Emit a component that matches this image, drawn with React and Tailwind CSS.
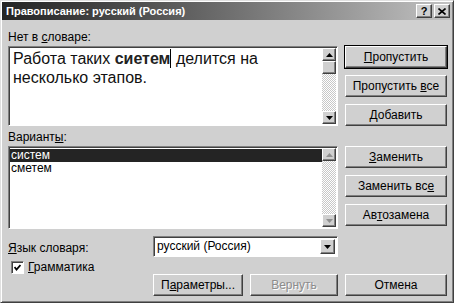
import React from "react";

const raised =
  "border border-t-white border-l-white border-r-[#404040] border-b-[#404040] shadow-[inset_-1px_-1px_#808080] bg-[#d0d0d0]";
const sunken =
  "border border-t-[#808080] border-l-[#808080] border-r-white border-b-white shadow-[inset_1px_1px_#404040] bg-white";
const track =
  "bg-[repeating-conic-gradient(#ffffff_0_25%,#c8c8c8_0_50%)] bg-[length:2px_2px]";

function Arrow({ up, color = "#000" }) {
  return (
    <svg width="7" height="4" viewBox="0 0 7 4">
      <path d={up ? "M3.5 0 L7 4 L0 4 Z" : "M0 0 L7 0 L3.5 4 Z"} fill={color} />
    </svg>
  );
}

function ArrowBox({ up, color, className = "" }) {
  return (
    <div className={`${raised} w-[14px] h-[13px] flex items-center justify-center ${className}`}>
      <Arrow up={up} color={color} />
    </div>
  );
}

function ScrollBar({ thumb, disabled }) {
  const c = disabled ? "#909090" : "#000";
  return (
    <div className="w-[14px] h-full flex flex-col shrink-0">
      <ArrowBox up color={c} />
      {thumb && <div className={`${raised} h-[13px]`}></div>}
      <div className={`flex-1 ${track}`}></div>
      <ArrowBox color={c} />
    </div>
  );
}

function Btn({ children, w = "w-[102px]", def, disabled }) {
  return (
    <div
      className={`${w} h-[22px] shrink-0 ${def ? "outline outline-1 outline-black" : ""} ${raised} flex items-center justify-center text-[12px] leading-[13px] ${
        disabled ? "text-[#8c8c8c] [text-shadow:1px_1px_#fff]" : "text-black"
      }`}
    >
      <span>{children}</span>
    </div>
  );
}

export default function App() {
  return (
    <div className="w-[456px] h-[305px] bg-white font-['Liberation_Sans',Arial,sans-serif] text-black select-none">
      <div className="w-[454px] h-[303px] bg-[#d0d0d0] border border-t-[#e0e0e0] border-l-[#e0e0e0] border-r-[#404040] border-b-[#404040] shadow-[inset_1px_1px_#fff,inset_-1px_-1px_#808080] p-[1px] flex flex-col">
        {/* title bar */}
        <div className="h-[18px] bg-gradient-to-r from-[#242424] to-[#c3c3c3] flex items-center pl-[4px] pr-[2px]">
          <span className="text-white font-bold text-[11px] leading-[14px] flex-1">
            Правописание: русский (Россия)
          </span>
          <div className={`${raised} w-[16px] h-[14px] flex items-center justify-center text-[11px] font-bold leading-none`}>
            ?
          </div>
          <div className={`${raised} ml-[2px] w-[16px] h-[14px] flex items-center justify-center`}>
            <svg width="8" height="7" viewBox="0 0 8 7">
              <path d="M0.5 0.5 L7.5 6.5 M7.5 0.5 L0.5 6.5" stroke="#000" strokeWidth="1.6" />
            </svg>
          </div>
        </div>

        <div className="pl-[6px] text-[12px] leading-[13px]">
          {/* row 1 */}
          <div className="flex mt-[11px]">
            <div className="w-[330px] flex flex-col">
              <div className="h-[13px]">
                Нет в <u>с</u>ловаре:
              </div>
              <div className={`${sunken} mt-[2px] h-[80px] flex p-[1px]`}>
                <div className="flex-1 pl-[3px] pt-[1px] text-[16px] leading-[19px] text-[#111]">
                  Работа таких <b className="text-[#222]">сиетем</b>
                  <span className="inline-block w-px h-[19px] bg-black align-top"></span> делится на
                  <br />
                  несколько этапов.
                </div>
                <ScrollBar thumb />
              </div>
            </div>
            <div className="ml-[7px] pt-[15px] flex flex-col gap-[7px]">
              <Btn def>
                <u>П</u>ропустить
              </Btn>
              <Btn>
                Пропустить <u>в</u>се
              </Btn>
              <Btn>
                <u>Д</u>обавить
              </Btn>
            </div>
          </div>

          {/* row 2 */}
          <div className="flex mt-[5px]">
            <div className="w-[330px] flex flex-col">
              <div className="h-[13px]">
                Вариант<u>ы</u>:
              </div>
              <div className={`${sunken} mt-[2px] h-[83px] flex p-[1px]`}>
                <div className="flex-1 flex flex-col pt-px">
                  <div className="h-[13px] bg-[#242424] text-white pl-[1px]">систем</div>
                  <div className="h-[13px] pl-[1px]">сметем</div>
                </div>
                <ScrollBar disabled />
              </div>
            </div>
            <div className="ml-[7px] pt-[15px] flex flex-col gap-[7px]">
              <Btn>
                <u>З</u>аменить
              </Btn>
              <Btn>
                Заменить вс<u>е</u>
              </Btn>
              <Btn>
                Ав<u>т</u>озамена
              </Btn>
            </div>
          </div>

          {/* row 3 */}
          <div className="flex items-center mt-[7px] w-[330px] h-[21px]">
            <div className="w-[145px] pt-[3px]">
              <u>Я</u>зык словаря:
            </div>
            <div className={`${sunken} flex-1 h-[21px] flex items-center p-[2px]`}>
              <span className="flex-1 pl-[1px]">русский (Россия)</span>
              <ArrowBox className="h-[15px] w-[15px]" />
            </div>
          </div>

          {/* row 4 */}
          <div className="flex mt-[4px]">
            <div className="w-[145px] flex items-center pl-[3px] h-[13px]">
              <div className={`${sunken} w-[13px] h-[13px] flex items-center justify-center`}>
                <svg width="7" height="7" viewBox="0 0 7 7">
                  <path d="M0.5 3 L2.5 5.5 L6.5 1" stroke="#000" strokeWidth="1.8" fill="none" />
                </svg>
              </div>
              <span className="ml-[4px]">
                <u>Г</u>рамматика
              </span>
            </div>
            <div className="mt-[13px] flex gap-[7px]">
              <Btn w="w-[90px]">
                П<u>а</u>раметры...
              </Btn>
              <Btn w="w-[88px]" disabled>
                Вернуть
              </Btn>
              <Btn>Отмена</Btn>
            </div>
          </div>
        </div>
      </div>
    </div>
  );
}
